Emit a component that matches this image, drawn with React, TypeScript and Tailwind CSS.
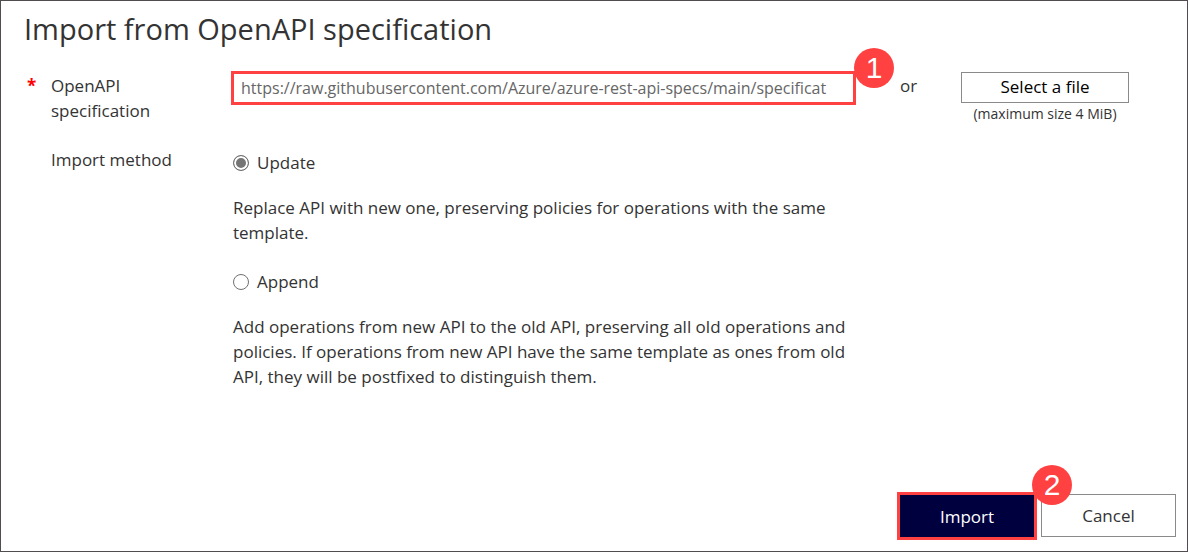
import { useState } from "react";

function Badge({ children, className }: { children: string; className: string }) {
  return (
    <span
      className={`absolute z-10 flex size-10 items-center justify-center rounded-full bg-[#ff4141] font-['Liberation_Sans',sans-serif] text-[30px] leading-10 text-white ${className}`}
    >
      {children}
    </span>
  );
}

type Method = "update" | "append";

const methods: { id: Method; label: string; text: string }[] = [
  {
    id: "update",
    label: "Update",
    text: "Replace API with new one, preserving policies for operations with the same template.",
  },
  {
    id: "append",
    label: "Append",
    text: "Add operations from new API to the old API, preserving all old operations and policies. If operations from new API have the same template as ones from old API, they will be postfixed to distinguish them.",
  },
];

export default function App() {
  const [url, setUrl] = useState(
    "https://raw.githubusercontent.com/Azure/azure-rest-api-specs/main/specificat"
  );
  const [method, setMethod] = useState<Method>("update");

  return (
    <form
      onSubmit={(e) => e.preventDefault()}
      className="flex min-h-screen flex-col border border-[#504c4f] bg-white font-['Open_Sans','Noto_Sans',sans-serif] text-[17px] leading-[25px] text-[#333]"
    >
      <h1 className="px-[23px] pt-2 text-[29px] leading-10">Import from OpenAPI specification</h1>

      <div className="mt-[22px] grid grid-cols-[24px_180px_1fr_105px_168px] items-start pr-[58px] pl-[26px]">
        <span className="pt-0.5 font-bold text-[#f00]">*</span>
        <label htmlFor="spec" className="w-[120px] pt-0.5">
          OpenAPI specification
        </label>
        <div className="relative">
          <input
            id="spec"
            type="text"
            value={url}
            onChange={(e) => setUrl(e.target.value)}
            className="block h-[34px] w-full border-3 border-[#ff4141] bg-white px-[7px] text-[16px] text-[#666] outline-none"
          />
          <Badge className="-top-[23px] -right-[38px]">1</Badge>
        </div>
        <span className="pt-0.5 text-center">or</span>
        <div className="pt-px text-center">
          <button type="button" className="block h-[31px] w-full border border-[#8a8a8a] bg-white pb-0.5 text-black">
            Select a file
          </button>
          <p className="text-[14px] leading-[22px]">(maximum size 4 MiB)</p>
        </div>
      </div>

      <fieldset
        aria-labelledby="method"
        className="mt-[22px] grid grid-cols-[180px_1fr] pr-[331px] pl-[50px]"
      >
        <span id="method">Import method</span>
        <div className="flex flex-col gap-6 pt-[3px] pl-0.5">
          {methods.map((m) => (
            <div key={m.id}>
              <label className="flex items-center gap-2">
                <input
                  type="radio"
                  name="method"
                  checked={method === m.id}
                  onChange={() => setMethod(m.id)}
                  className="size-4 appearance-none rounded-full border border-[#707070] bg-white checked:bg-[#757575] checked:shadow-[inset_0_0_0_2px_white]"
                />
                {m.label}
              </label>
              <p className="mt-5">{m.text}</p>
            </div>
          ))}
        </div>
      </fieldset>

      <div className="mt-auto flex items-start justify-end gap-1 pt-10 pr-[11px] pb-[11px]">
        <div className="relative">
          <button
            type="submit"
            className="block h-12 w-[140px] border-3 border-[#ff4141] bg-[#00003f] text-white"
          >
            Import
          </button>
          <Badge className="-top-[27px] -right-[35px]">2</Badge>
        </div>
        <button type="button" className="mt-0.5 h-[43px] w-[135px] border border-[#8a8a8a] bg-white">
          Cancel
        </button>
      </div>
    </form>
  );
}
